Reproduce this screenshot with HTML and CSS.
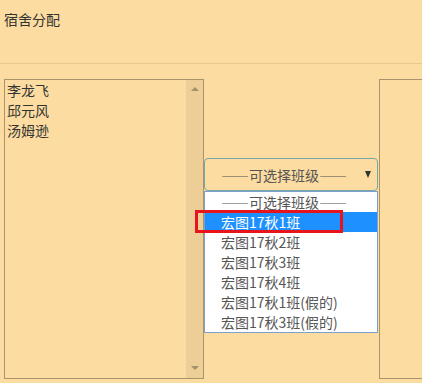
FILE: index.html
```html
<!DOCTYPE html>
<html lang="zh">
<head>
<meta charset="utf-8">
<title>宿舍分配</title>
<link rel="stylesheet" href="styles.css">
</head>
<body>
<div class="page">
  <div class="header">宿舍分配</div>
  <div class="main">
    <div class="listbox">
      <ul class="items">
        <li>李龙飞</li>
        <li>邱元风</li>
        <li>汤姆逊</li>
      </ul>
      <div class="scrollbar">
        <span class="arrow-up"></span>
        <span class="arrow-down"></span>
      </div>
    </div>
    <div class="middle">
      <div class="select">
        <span class="select-text">——可选择班级——</span>
        <span class="caret"></span>
      </div>
      <div class="dropdown">
        <div class="option">——可选择班级——</div>
        <div class="option selected">宏图17秋1班</div>
        <div class="option">宏图17秋2班</div>
        <div class="option">宏图17秋3班</div>
        <div class="option">宏图17秋4班</div>
        <div class="option">宏图17秋1班(假的)</div>
        <div class="option">宏图17秋3班(假的)</div>
        <div class="mark"></div>
      </div>
    </div>
    <div class="listbox right"></div>
  </div>
</div>
</body>
</html>
```

FILE: styles.css
```css
html, body {
  margin: 0;
  padding: 0;
  background: #fcdca0;
  overflow: hidden;
}
body {
  width: 422px;
  height: 383px;
  font-family: "Noto Sans CJK SC", "Noto Sans", sans-serif;
  font-size: 14px;
  color: #333;
}
.header {
  height: 54px;
  padding: 9px 0 0 4px;
  line-height: 20px;
  border-bottom: 1px solid #e9c78e;
}
.main {
  display: flex;
  align-items: flex-start;
  padding: 15px 0 0 4px;
}
.listbox {
  box-sizing: border-box;
  width: 200px;
  height: 300px;
  border: 1px solid #a8946c;
  display: flex;
  flex-shrink: 0;
}
.items {
  list-style: none;
  margin: 0;
  padding: 0 0 0 2px;
  flex: 1;
  line-height: 20px;
  color: #333;
}
.scrollbar {
  width: 17px;
  background: #ecce96;
  display: flex;
  flex-direction: column;
  justify-content: space-between;
  align-items: center;
  padding: 7px 0 8px;
}
.arrow-up, .arrow-down {
  width: 0;
  height: 0;
  border-left: 4px solid transparent;
  border-right: 4px solid transparent;
}
.arrow-up {
  border-bottom: 4px solid #a4906a;
}
.arrow-down {
  border-top: 4px solid #a4906a;
}
.middle {
  width: 175px;
  flex-shrink: 0;
  padding-top: 79px;
}
.select {
  box-sizing: border-box;
  width: 174px;
  height: 33px;
  border: 1px solid #76a6a6;
  border-radius: 4px;
  display: flex;
  align-items: center;
  padding: 0 6px 0 16px;
  color: #555;
}
.select-text {
  flex: 1;
}
.caret {
  width: 0;
  height: 0;
  border-left: 3.5px solid transparent;
  border-right: 3.5px solid transparent;
  border-top: 7px solid #333;
}
.dropdown {
  position: relative;
  box-sizing: border-box;
  width: 174px;
  border: 1px solid #7d9fcc;
  background: #fff;
}
.option {
  height: 20px;
  line-height: 20px;
  padding-left: 16px;
  color: #555;
}
.option.selected {
  background: #1e90ff;
  color: #fff;
}
.mark {
  position: absolute;
  left: -10px;
  top: 18px;
  width: 142px;
  height: 17px;
  border: 3px solid #e8141c;
}
.listbox.right {
  flex: 1;
  width: auto;
  flex-shrink: 1;
  min-width: 0;
  border-right: none;
}
```
